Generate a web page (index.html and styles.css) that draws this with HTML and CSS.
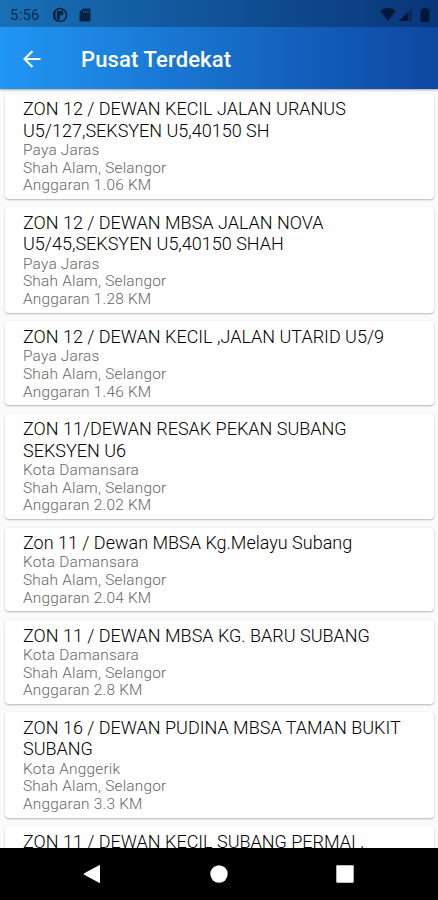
FILE: index.html
```html
<!DOCTYPE html>
<html lang="ms">
  <head>
    <meta charset="UTF-8" />
    <meta name="viewport" content="width=device-width, initial-scale=1.0" />
    <title>Pusat Terdekat</title>
    <link rel="stylesheet" href="styles.css">
  </head>
  <body>
    <header class="header">
      <div class="status-bar">
        <span class="clock">5:56</span>
        <svg class="icon-app" width="16" height="16" viewBox="0 0 16 16">
          <circle cx="8" cy="8" r="6.500" fill="none" stroke="currentColor" stroke-width="1.500" />
          <path d="M4.800 3.800h6.400v4.400H8v4.600H4.800z" fill="currentColor" />
          <path d="M2 4.500h1.500v8L2 11z" fill="currentColor" />
        </svg>
        <svg class="icon-card" width="12" height="14" viewBox="0 0 12 14">
          <path fill-rule="evenodd" d="M4 .5h6.500q1 0 1 1v11q0 1-1 1h-9q-1 0-1-1V4zM4 2.800v2h1v-2zm2.200 0v2h1v-2zm2.200 0v2h1v-2z" fill="currentColor" />
        </svg>
        <div class="status-right">
          <svg width="16" height="13" viewBox="0 0 16 13">
            <path d="M0 2.500Q8-2.300 16 2.500L8 13z" fill="currentColor" />
          </svg>
          <svg class="icon-signal" width="13" height="13" viewBox="0 0 13 13">
            <path d="M0 13 13 0v13z" fill="currentColor" opacity=".4" />
            <path d="M0 13 8.500 4.500V13z" fill="currentColor" />
          </svg>
          <svg class="icon-battery" width="10" height="14" viewBox="0 0 10 14">
            <path d="M3 0h4v1.300h1.500q1 0 1 1V13q0 1-1 1h-7q-1 0-1-1V2.300q0-1 1-1H3z" fill="currentColor" />
          </svg>
        </div>
      </div>
      <div class="app-bar">
        <svg class="back" width="18" height="18" viewBox="0 0 18 18">
          <path d="M17.500 9H1.500M9.500 1 1.500 9l8 8" fill="none" stroke="#fff" stroke-width="2.100" />
        </svg>
        <h1>Pusat Terdekat</h1>
      </div>
    </header>

    <main class="list">
      <div class="card">
        <h2>ZON 12 / DEWAN KECIL JALAN URANUS<br>U5/127,SEKSYEN U5,40150 SH</h2>
        <p>Paya Jaras</p>
        <p>Shah Alam, Selangor</p>
        <p>Anggaran 1.06 KM</p>
      </div>
      <div class="card">
        <h2>ZON 12 / DEWAN MBSA JALAN NOVA<br>U5/45,SEKSYEN U5,40150 SHAH</h2>
        <p>Paya Jaras</p>
        <p>Shah Alam, Selangor</p>
        <p>Anggaran 1.28 KM</p>
      </div>
      <div class="card">
        <h2>ZON 12 / DEWAN KECIL ,JALAN UTARID U5/9</h2>
        <p>Paya Jaras</p>
        <p>Shah Alam, Selangor</p>
        <p>Anggaran 1.46 KM</p>
      </div>
      <div class="card">
        <h2>ZON 11/DEWAN RESAK PEKAN SUBANG<br>SEKSYEN U6</h2>
        <p>Kota Damansara</p>
        <p>Shah Alam, Selangor</p>
        <p>Anggaran 2.02 KM</p>
      </div>
      <div class="card">
        <h2>Zon 11 / Dewan MBSA Kg.Melayu Subang</h2>
        <p>Kota Damansara</p>
        <p>Shah Alam, Selangor</p>
        <p>Anggaran 2.04 KM</p>
      </div>
      <div class="card">
        <h2>ZON 11 / DEWAN MBSA KG. BARU SUBANG</h2>
        <p>Kota Damansara</p>
        <p>Shah Alam, Selangor</p>
        <p>Anggaran 2.8 KM</p>
      </div>
      <div class="card">
        <h2>ZON 16 / DEWAN PUDINA MBSA TAMAN BUKIT<br>SUBANG</h2>
        <p>Kota Anggerik</p>
        <p>Shah Alam, Selangor</p>
        <p>Anggaran 3.3 KM</p>
      </div>
      <div class="card">
        <h2>ZON 11 / DEWAN KECIL SUBANG PERMAI ,</h2>
      </div>
    </main>

    <nav class="nav-bar">
      <svg width="18" height="20" viewBox="0 0 18 20">
        <path d="M1.300 9.200 16 1.200q1-.5 1 .5v16.600q0 1-1 .5L1.300 10.800q-1.300-.8 0-1.600z" fill="#fff" />
      </svg>
      <svg width="18" height="18" viewBox="0 0 18 18">
        <circle cx="9" cy="9" r="8.700" fill="#fff" />
      </svg>
      <svg width="18" height="18" viewBox="0 0 18 18">
        <rect x=".3" y=".3" width="17.400" height="17.400" rx="1" fill="#fff" />
      </svg>
    </nav>
  </body>
</html>
```
FILE: styles.css
```css
* {
  box-sizing: border-box;
}

body {
  margin: 0;
  height: 900px;
  display: flex;
  flex-direction: column;
  overflow: hidden;
  background-color: #fafafa;
  font-family: Roboto, "Liberation Sans", sans-serif;
}

h1,
h2,
p {
  margin: 0;
  font-weight: 400;
  white-space: nowrap;
}

.header {
  flex: none;
  height: 89px;
  background: linear-gradient(to right, #2196f3, #0d47a1);
  box-shadow: 0 1px 2px rgba(0, 0, 0, 0.35);
  z-index: 1;
}

.status-bar {
  height: 27px;
  display: flex;
  align-items: center;
  padding: 2px 8px 0 10px;
  background-color: rgba(0, 0, 0, 0.25);
  color: rgba(0, 10, 30, 0.72);
}

.clock {
  width: 42px;
  font-size: 15px;
  letter-spacing: 0.2px;
}

.icon-card {
  margin-left: 11px;
}

.status-right {
  display: flex;
  align-items: center;
  margin-left: auto;
}

.icon-signal {
  margin-left: 3px;
}

.icon-battery {
  margin-left: 8px;
}

.app-bar {
  height: 62px;
  display: flex;
  align-items: center;
  padding: 2px 0 0 23px;
}

.app-bar h1 {
  margin-left: 40px;
  color: #fff;
  font-size: 22px;
  font-weight: 500;
  letter-spacing: 0.13px;
}

.list {
  flex: 1;
  min-height: 0;
  overflow: hidden;
  padding: 4.600px 4px 0 5px;
}

.card {
  margin-bottom: 8.6px;
  padding: 4.600px 18px 3.800px;
  background-color: #fff;
  border-radius: 4px;
  box-shadow: 0 1px 2px rgba(0, 0, 0, 0.28);
}

.card h2 {
  padding-bottom: 0.8px;
  color: #000;
  font-size: 18px;
  font-weight: 300;
  line-height: 21.400px;
}

.card p {
  color: #666;
  font-size: 15.400px;
  font-weight: 300;
  letter-spacing: 0.22px;
  line-height: 17.750px;
}

.nav-bar {
  flex: none;
  height: 52px;
  display: flex;
  justify-content: space-between;
  align-items: center;
  padding: 0 84px 0 83px;
  background-color: #000;
}
```
